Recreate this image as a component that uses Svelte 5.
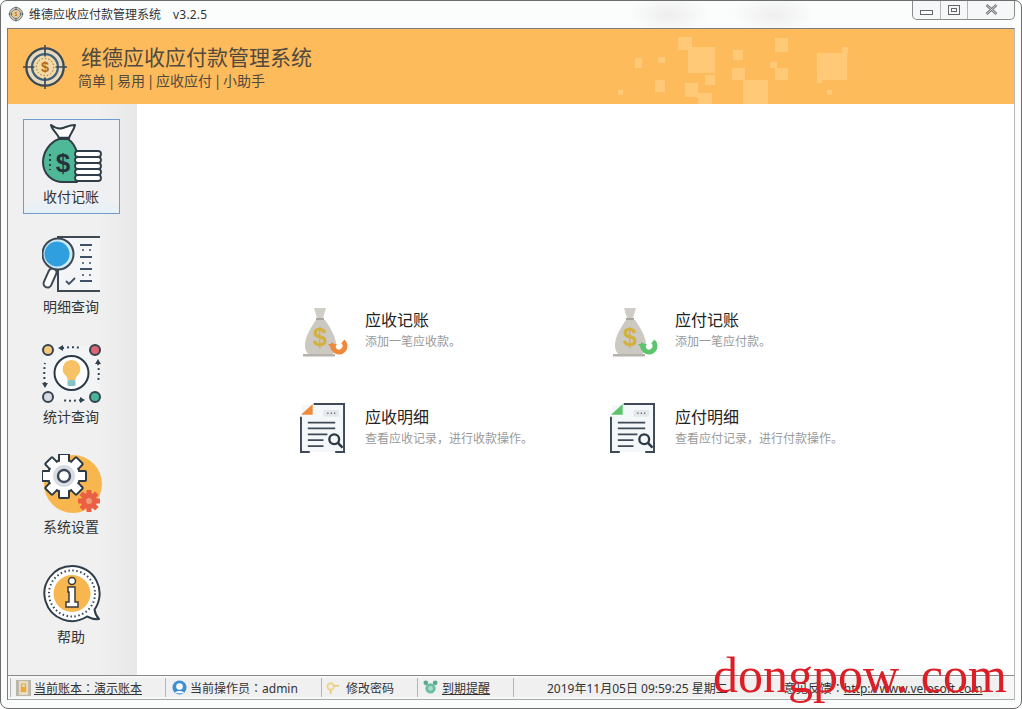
<script>
	const navItems = [
		{ label: '收付记账', icon: 'bag', active: true },
		{ label: '明细查询', icon: 'search' },
		{ label: '统计查询', icon: 'bulb' },
		{ label: '系统设置', icon: 'gear' },
		{ label: '帮助', icon: 'info' }
	];

	const actions = [
		{ title: '应收记账', desc: '添加一笔应收款。', kind: 'bag', tint: '#ef8a3c' },
		{ title: '应付记账', desc: '添加一笔应付款。', kind: 'bag', tint: '#5cc46c' },
		{ title: '应收明细', desc: '查看应收记录，进行收款操作。', kind: 'doc', tint: '#ef8a3c' },
		{ title: '应付明细', desc: '查看应付记录，进行付款操作。', kind: 'doc', tint: '#5cc46c' }
	];

	// decorative squares in the header, x y w h
	const squares = [
		[688, 47, 27, 26], [817, 53, 30, 27], [743, 80, 25, 24], [732, 68, 13, 12],
		[775, 38, 13, 14], [775, 68, 13, 12], [678, 37, 14, 13], [685, 83, 13, 14],
		[698, 93, 14, 11], [705, 75, 10, 10], [733, 50, 10, 10], [655, 80, 10, 12],
		[658, 57, 7, 6], [635, 58, 7, 10], [618, 90, 5, 5], [827, 90, 5, 5],
		[842, 47, 6, 6], [817, 77, 5, 6], [770, 62, 7, 6]
	];

	const gearTeeth = [0, 45, 90, 135, 180, 225, 270, 315];
	const coinRows = [27, 33, 39, 45, 51];
</script>

{#snippet target(size)}
	<svg width={size} height={size} viewBox="0 0 48 48">
		<path d="M24 1v46M1 24h46" stroke="#3b4a55" stroke-width="1.6" />
		<circle cx="24" cy="24" r="19.5" fill="#e6d9bd" stroke="#3b4a55" stroke-width="2.4" />
		<circle cx="24" cy="24" r="13.5" fill="#f3d9a4" stroke="#41627c" stroke-width="2.4" />
		<path d="M24 4v9M24 35v9M4 24h9M35 24h9" stroke="#3b4a55" stroke-width="1.8" />
		<circle cx="24" cy="24" r="9" fill="none" stroke="#8a6a3a" stroke-width="1" stroke-dasharray="1.5 2" />
		<text x="24" y="29.5" text-anchor="middle" font-size="15" font-weight="700" font-family="Liberation Sans" fill="#b06a20">$</text>
	</svg>
{/snippet}

{#snippet bagIcon()}
	<svg width="60" height="60" viewBox="0 0 60 60">
		<path d="M9 1c4 3 9 4 12 3s7-3 12-3c-1 5-5 9-6 13H17C16 10 10 6 9 1z" fill="#fff" stroke="#2f3d48" stroke-width="2" stroke-linejoin="round" />
		<path d="M16 14h12" stroke="#2f3d48" stroke-width="2.4" />
		<path d="M17 15C8 18 1 28 1 38c0 12 9 20 20 20h14V28c-2-6-6-11-9-13z" fill="#4fb896" stroke="#2f3d48" stroke-width="2" stroke-linejoin="round" />
		<path d="M8 30v16" stroke="#2f3d48" stroke-width="2" stroke-dasharray="2 3" />
		<text x="21" y="48" text-anchor="middle" font-size="26" font-weight="700" font-family="Liberation Sans" fill="#24333d">$</text>
		{#each coinRows as y}
			<rect x="33" {y} width="26" height="6" rx="3" fill="#fff" stroke="#2f3d48" stroke-width="1.8" />
		{/each}
	</svg>
{/snippet}

{#snippet searchIcon()}
	<svg width="60" height="60" viewBox="0 0 60 60">
		<path d="M16 3h42v54H16z" fill="#f4f5f7" />
		<path d="M58 3H16v54h42" fill="none" stroke="#3c4853" stroke-width="2" />
		<path d="M38 11h12M38 23h12M38 35h12M38 47h12" stroke="#3f5166" stroke-width="2" />
		<path d="M40 16h2M47 16h2M40 29h2M47 29h2M40 41h2M47 41h2" stroke="#3f5166" stroke-width="1.6" />
		<path d="M24 47l3 3 6-6" fill="none" stroke="#3f5166" stroke-width="1.8" />
		<rect x="4" y="34" width="8" height="20" rx="4" transform="rotate(24 8 44)" fill="#fff" stroke="#3c4853" stroke-width="2" />
		<circle cx="16" cy="20" r="15.5" fill="#cfeaf7" stroke="#3c4853" stroke-width="2" />
		<circle cx="15" cy="20" r="12.5" fill="#2f9fe0" />
	</svg>
{/snippet}

{#snippet bulbIcon()}
	<svg width="60" height="60" viewBox="0 0 60 60">
		<rect x="2" y="2" width="56" height="56" fill="#f3f4f6" />
		<circle cx="6" cy="6" r="5" fill="#f3c877" stroke="#344350" stroke-width="2" />
		<circle cx="53" cy="6" r="5" fill="#dd6470" stroke="#344350" stroke-width="2" />
		<circle cx="6" cy="53" r="5" fill="#d9dbe2" stroke="#344350" stroke-width="2" />
		<circle cx="53" cy="53" r="5" fill="#48b596" stroke="#344350" stroke-width="2" />
		<path d="M20 4c7-1 13-1 20 0M56 19c1 7 1 13 0 20M39 56c-7 1-13 1-20 0M3 40c-1-7-1-14 0-21" fill="none" stroke="#344350" stroke-width="2" stroke-dasharray="2 3" />
		<path d="M21 1l-5 3 5 3zM59 20l-3-5-3 5zM38 53l5 3-5 3zM0 39l3 5 3-5z" fill="#344350" />
		<circle cx="29.5" cy="29" r="17" fill="#fff" stroke="#2c3a46" stroke-width="2" />
		<path d="M29.5 16a9 9 0 0 1 6 15.500c-1.500 1.500-2 3-2 4.500h-8c0-1.500-.5-3-2-4.500a9 9 0 0 1 6-15.500z" fill="#f6c265" />
		<rect x="25.500" y="36" width="8" height="6" rx="1.500" fill="#86c3c7" />
	</svg>
{/snippet}

{#snippet gearIcon()}
	<svg width="60" height="60" viewBox="0 0 60 60">
		<circle cx="31" cy="30" r="29" fill="#f8b74e" />
		<g transform="translate(22 22)">
			{#each gearTeeth as deg}
				<rect x="-5" y="-22" width="10" height="12" rx="1" fill="#fff" stroke="#2c3a46" stroke-width="2" transform="rotate({deg})" />
			{/each}
			<circle r="16" fill="#fff" stroke="#2c3a46" stroke-width="2" />
			{#each gearTeeth as deg}
				<rect x="-4" y="-19" width="8" height="8" fill="#fff" transform="rotate({deg})" />
			{/each}
			<circle r="11" fill="#d9dce3" />
			<circle r="6" fill="#fff" stroke="#3c4a58" stroke-width="2.4" />
		</g>
		<g transform="translate(47 47)">
			{#each gearTeeth as deg}
				<rect x="-2.500" y="-11" width="5" height="6" fill="#ea6043" transform="rotate({deg})" />
			{/each}
			<circle r="8" fill="#ea6043" />
			<circle r="3" fill="#f19a72" />
		</g>
	</svg>
{/snippet}

{#snippet infoIcon()}
	<svg width="60" height="60" viewBox="0 0 60 60">
		<path d="M30 2a27.500 27.500 0 1 0 15 50.500c4 2 8 3 12 2.500-3-3-4-6-4.500-9.500A27.500 27.500 0 0 0 30 2z" fill="#fff" stroke="#2f3e4b" stroke-width="2" stroke-linejoin="round" />
		<circle cx="30" cy="29.500" r="23" fill="none" stroke="#34485c" stroke-width="2" stroke-dasharray="1.500 2.500" />
		<circle cx="30" cy="29.500" r="18.500" fill="#f8b74e" />
		<circle cx="30" cy="17" r="3.500" fill="#fff" stroke="#3b3b3b" stroke-width="1.500" />
		<path d="M26 23h7v15h3v5H24v-5h3V28h-1z" fill="#fff" stroke="#3b3b3b" stroke-width="1.500" />
	</svg>
{/snippet}

{#snippet moneyBag(tint)}
	<svg width="52" height="52" viewBox="-1 -1 52 52">
		<path d="M12 1h12l-3 10h-6z" fill="#cfcdc5" />
		<path d="M14 12h8" stroke="#a8a69e" stroke-width="2" />
		<path d="M14 13C8 22 3 30 3 38c0 7 3 10 8 10h15c6 0 8-4 8-10 0-8-5-16-11-25z" fill="#cbc9c1" />
		<rect x="1" y="47" width="32" height="2.500" fill="#b5b3ab" />
		<text x="18" y="39" text-anchor="middle" font-size="25" font-weight="700" font-family="Liberation Sans" fill="#d2b13c">$</text>
		<circle cx="37" cy="39" r="6" fill="none" stroke={tint} stroke-width="5" stroke-dasharray="26 12" transform="rotate(-50 37 39)" />
		<path d="M26 37h9l-4 6z" fill={tint} />
	</svg>
{/snippet}

{#snippet docIcon(tint)}
	<svg class="doc" width="45" height="50" viewBox="0 0 46 51">
		<rect x="2" y="2" width="43" height="48" fill="#f5f8fa" />
		<path d="M1 14v36h9M36 50h9V1H14" fill="none" stroke="#3f4a56" stroke-width="2" />
		<path d="M1 12L13 1v11z" fill={tint} />
		<rect x="24" y="7" width="16" height="7" fill="#e4e8ec" />
		<path d="M28 10.500h1M31.500 10.500h1M35 10.500h1" stroke="#3f4a56" stroke-width="1.500" />
		<path d="M8 20h28M8 26h28M8 32h20M8 38h16M8 44h16" stroke="#3f4a56" stroke-width="1.800" />
		<circle cx="35" cy="37" r="5" fill="#f5f8fa" stroke="#2c3a46" stroke-width="2.400" />
		<path d="M38.500 40.500l5 5" stroke="#2c3a46" stroke-width="2.600" />
	</svg>
{/snippet}

<div class="window">
	<div class="titlebar">
		{@render target(16)}
		<span class="app-name">维德应收应付款管理系统</span>
		<span class="version">v3.2.5</span>
	</div>

	<div class="controls">
		<span class="ctl min"><i></i></span>
		<span class="ctl max"><i></i></span>
		<span class="ctl close">
			<svg width="13" height="11" viewBox="0 0 13 11">
				<path d="M1.500 1l10 9M11.500 1l-10 9" stroke="#6b6f74" stroke-width="2.400" fill="none" />
				<path d="M1.500 1l10 9M11.500 1l-10 9" stroke="#f2f3f4" stroke-width="0.800" fill="none" />
			</svg>
		</span>
	</div>

	<div class="frame">
		<header class="banner">
			<svg class="specks" width="1008" height="75" viewBox="8 29 1008 75">
				{#each squares as [x, y, w, h]}
					<rect {x} {y} width={w} height={h} fill="#ffcd80" opacity="0.8" />
				{/each}
			</svg>
			<div class="logo">{@render target(46)}</div>
			<div class="brand">
				<h1>维德应收应付款管理系统</h1>
				<p>简单 | 易用 | 应收应付 | 小助手</p>
			</div>
		</header>

		<div class="body">
			<nav class="sidebar">
				{#each navItems as item}
					<div class="nav-item" class:active={item.active}>
						<div class="nav-icon">
							{#if item.icon === 'bag'}
								{@render bagIcon()}
							{:else if item.icon === 'search'}
								{@render searchIcon()}
							{:else if item.icon === 'bulb'}
								{@render bulbIcon()}
							{:else if item.icon === 'gear'}
								{@render gearIcon()}
							{:else}
								{@render infoIcon()}
							{/if}
						</div>
						<span class="nav-label">{item.label}</span>
					</div>
				{/each}
			</nav>

			<main class="content">
				<div class="actions">
					{#each actions as action}
						<div class="action">
							<div class="action-icon">
								{#if action.kind === 'bag'}
									{@render moneyBag(action.tint)}
								{:else}
									{@render docIcon(action.tint)}
								{/if}
							</div>
							<div class="action-text">
								<div class="action-title">{action.title}</div>
								<div class="action-desc">{action.desc}</div>
							</div>
						</div>
					{/each}
				</div>
			</main>
		</div>

		<footer class="status">
			<div class="seg s1">
				<svg width="15" height="16" viewBox="0 0 16 16" preserveAspectRatio="none">
					<rect width="16" height="16" fill="#b9b6ac" />
					<rect x="3" y="1" width="10" height="14" fill="#e6dcc0" />
					<rect x="5" y="7" width="6" height="5" fill="#f0a83c" />
					<path d="M6 7V4h4v3" fill="none" stroke="#f0a83c" stroke-width="1.200" />
				</svg>
				<u>当前账本<span class="colon">：</span>演示账本</u>
			</div>
			<div class="seg s2">
				<svg width="15" height="15" viewBox="0 0 16 16">
					<circle cx="8" cy="8" r="7.500" fill="#3d8fd0" />
					<circle cx="8" cy="7" r="3.500" fill="#fff" />
					<path d="M3 14c1-3 9-3 10 0z" fill="#fff" />
				</svg>
				<span>当前操作员<span class="colon">：</span>admin</span>
			</div>
			<div class="seg s3">
				<svg width="15" height="15" viewBox="0 0 16 16">
					<circle cx="6" cy="7" r="3.500" fill="none" stroke="#f0d48a" stroke-width="2" />
					<path d="M6 10v5M9 6h6" stroke="#e8c878" stroke-width="1.600" />
				</svg>
				<span>修改密码</span>
			</div>
			<div class="seg s4">
				<svg width="15" height="15" viewBox="0 0 16 16">
					<circle cx="8" cy="9" r="5.500" fill="#6bbfa0" />
					<circle cx="8" cy="9" r="2.500" fill="#a9dcc6" />
					<circle cx="3" cy="3" r="2.500" fill="#5aa98e" />
					<circle cx="13" cy="3" r="2.500" fill="#5aa98e" />
				</svg>
				<u>到期提醒</u>
			</div>
			<div class="seg s5">
				<span class="clock">2019年11月05日 09:59:25 星期二</span>
				<span class="feedback">意见反馈<span class="colon">：</span><u>http://www.veiosoft.com</u></span>
			</div>
		</footer>
	</div>

	<div class="watermark">dongpow. com</div>
</div>

<style>
	:global(body) {
		margin: 0;
		background: #fff;
	}

	.window {
		position: relative;
		box-sizing: border-box;
		width: 1022px;
		height: 709px;
		overflow: hidden;
		display: flex;
		flex-direction: column;
		padding: 0 6px;
		border: 1px solid #6d6d6d;
		border-radius: 7px 7px 8px 8px;
		background: #fbfcfc;
		font-family: 'Noto Sans', 'Noto Sans CJK SC', sans-serif;
		color: #333;
	}

	.titlebar {
		height: 27px;
		flex: none;
		display: flex;
		align-items: center;
		gap: 5px;
		margin: 0 -6px;
		padding: 0 0 1px 7px;
		box-sizing: border-box;
		font-size: 12px;
		background:
			radial-gradient(ellipse 40px 20px at 668px 14px, #eeeeee, transparent),
			radial-gradient(ellipse 42px 20px at 773px 14px, #efefef, transparent);
	}

	.version {
		margin-left: 7px;
		letter-spacing: 0.2px;
	}

	.controls {
		position: absolute;
		top: -1px;
		right: 6px;
		display: flex;
		height: 20px;
		box-sizing: border-box;
		border: 1px solid #8b8b8b;
		border-top: none;
		border-radius: 0 0 5px 5px;
		background: #f6f7f8;
	}

	.ctl {
		display: flex;
		align-items: center;
		justify-content: center;
		box-sizing: border-box;
		border-right: 1px solid #b5b5b5;
	}

	.ctl.min { width: 28px; }
	.ctl.max { width: 27px; }
	.ctl.close { width: 46px; border-right: none; }

	.min i {
		display: block;
		width: 11px;
		height: 3px;
		margin-top: 6px;
		border: 1px solid #666;
		background: #fff;
	}

	.max i {
		display: block;
		box-sizing: border-box;
		width: 12px;
		height: 10px;
		border: 1px solid #666;
		box-shadow: inset 0 0 0 2px #f6f7f8, inset 0 0 0 3px #666;
	}

	.frame {
		flex: 1;
		min-height: 0;
		display: flex;
		flex-direction: column;
		border: 1px solid #7c7c7c;
		border-bottom: none;
		border-right-color: #b8b8b8;
		margin-bottom: 8px;
		background: #fff;
	}

	.banner {
		position: relative;
		height: 75px;
		flex: none;
		display: flex;
		align-items: center;
		gap: 12px;
		padding-left: 14px;
		box-sizing: border-box;
		background: #fdbb5c;
	}

	.specks {
		position: absolute;
		top: 0;
		left: 0;
	}

	.logo {
		position: relative;
		display: flex;
	}

	.logo svg,
	.titlebar svg {
		display: block;
	}

	.brand {
		position: relative;
		color: #514a3f;
	}

	.brand h1 {
		margin: 0 0 0 1px;
		font-size: 21px;
		line-height: 28px;
		font-weight: 400;
	}

	.brand p {
		margin: 0 0 0 -2px;
		font-size: 14px;
		line-height: 20px;
		word-spacing: -2px;
	}

	.body {
		flex: 1;
		min-height: 0;
		display: flex;
	}

	.sidebar {
		width: 129px;
		flex: none;
		display: flex;
		flex-direction: column;
		gap: 15px;
		padding: 15px 0 0 15px;
		box-sizing: border-box;
		background: linear-gradient(to right, #f0f0f0 70%, #ebebeb 88%, #e8e8e8);
	}

	.nav-item {
		width: 97px;
		height: 95px;
		flex: none;
		box-sizing: border-box;
		border: 1px solid transparent;
		display: flex;
		flex-direction: column;
		align-items: center;
		font-size: 14px;
		line-height: 20px;
		color: #333;
	}

	.nav-item.active {
		border-color: #6f9bd0;
		background: linear-gradient(#f0f0f2 85%, #e4f1f8);
	}

	.nav-icon {
		height: 60px;
		margin: 4px 0 3px;
	}

	.nav-label {
		margin-left: -1px;
	}

	.nav-icon svg,
	.action-icon svg,
	.seg svg {
		display: block;
	}

	.content {
		flex: 1;
		padding: 202px 0 0 164px;
		box-sizing: border-box;
	}

	.actions {
		display: grid;
		grid-template-columns: 310px 310px;
		grid-auto-rows: 97px;
	}

	.action {
		display: flex;
		gap: 12px;
	}

	.action-icon {
		width: 52px;
		flex: none;
	}

	.action-icon .doc {
		margin-left: -1px;
	}

	.action-title {
		font-size: 16px;
		line-height: 24px;
		margin-top: 2px;
		color: #222;
	}

	.action-desc {
		font-size: 12px;
		line-height: 18px;
		margin-top: 1px;
		color: #9a9a9a;
	}

	.status {
		height: 25px;
		flex: none;
		display: flex;
		align-items: stretch;
		box-sizing: border-box;
		padding: 2px 14px 2px 2px;
		border-top: 1px solid #8a8a8a;
		border-bottom: 1px solid #aaa;
		font-size: 12px;
		background: #f7f7f7;
	}

	.seg {
		display: flex;
		align-items: center;
		gap: 3px;
		box-sizing: border-box;
		padding-left: 5px;
		background: #f0f0f0;
		border-left: 1px solid #b5b5b5;
		white-space: nowrap;
	}

	.colon {
		font-family: 'Noto Sans CJK TC', sans-serif;
	}

	.s1 { width: 155px; }
	.s2 { width: 156px; padding-left: 6px; }
	.s3 { width: 96px; padding-left: 3px; gap: 6px; }
	.s4 { width: 96px; gap: 4px; }
	.s5 { flex: 1; padding-left: 33px; }

	.feedback {
		margin-left: 53px;
	}

	.watermark {
		position: absolute;
		left: 712px;
		top: 645px;
		font-family: 'Liberation Serif', serif;
		font-size: 50px;
		line-height: 58px;
		color: #dc1f26;
		white-space: nowrap;
		pointer-events: none;
	}
</style>
